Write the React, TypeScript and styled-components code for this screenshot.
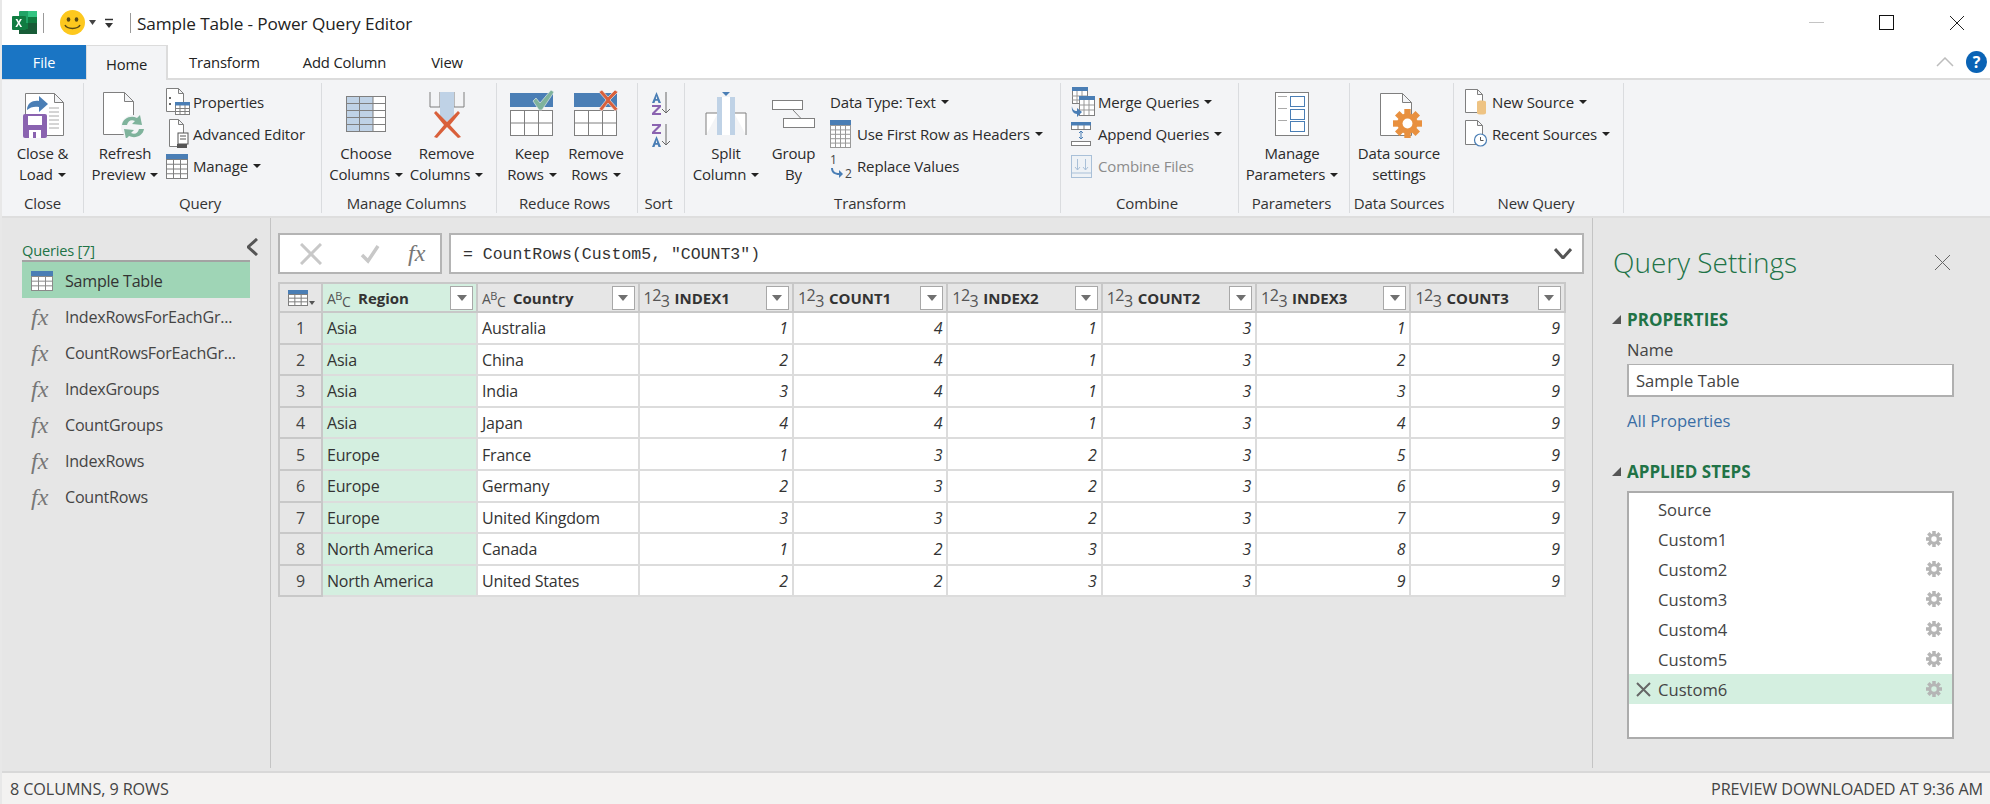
import React from "react";
import styled, { createGlobalStyle } from "styled-components";

const Global = createGlobalStyle`
  html, body { margin: 0; padding: 0; width: 1990px; height: 804px; overflow: hidden; background: #fff; }
  * { box-sizing: border-box; }
  body { font-family: "Open Sans", "Noto Sans", sans-serif; color: #2b2b2b; }
`;

const Window = styled.div`
  width: 1990px; height: 804px; display: flex; flex-direction: column; overflow: hidden;
  font-size: 15px; letter-spacing: -0.15px; border-left: 2px solid #e8e8e8;
`;

const TitleBar = styled.div`
  height: 45px; display: flex; align-items: center; flex: none; position: relative; padding-left: 10px;
`;
const TitleSep = styled.div<{ $l: number; $r: number }>`
  width: 1px; height: 20px; background: #9a9a9a; margin: 0 ${(p) => p.$r}px 0 ${(p) => p.$l}px;
`;
const TitleText = styled.div`
  font-size: 17.2px; color: #222; letter-spacing: -0.1px; margin-left: 6px; padding-top: 2px;
`;
const WindowControls = styled.div`
  margin-left: auto; display: flex; align-items: center; gap: 55px; padding-right: 25px;
`;

const TabRow = styled.div`
  height: 35px; flex: none; display: flex; align-items: stretch; border-bottom: 2px solid #dcdcdc; position: relative;
`;
const FileTab = styled.div`
  width: 84px; height: 34px; background: #1a75c4; color: #fff; display: flex; align-items: center; justify-content: center; font-size: 14.5px; padding-top: 1px;
`;
const Tab = styled.div<{ $active?: boolean; $w: number }>`
  width: ${(p) => p.$w}px; height: ${(p) => (p.$active ? 35 : 33)}px; display: flex; align-items: center; justify-content: center; font-size: 14.8px; color: #222; padding-top: 1px;
  ${(p) => p.$active && `background:#f3f4f6;border:2px solid #dcdcdc;border-width:1px 2px 0 1px;`}
`;
const TabRight = styled.div`
  margin-left: auto; display: flex; align-items: center; gap: 12px; padding-right: 3px;
`;

const Ribbon = styled.div`
  height: 138px; flex: none; display: flex; background: #f3f4f6; border-bottom: 2px solid #dedede;
`;
const Group = styled.div<{ $w: number }>`
  width: ${(p) => p.$w}px; display: flex; flex-direction: column; flex: none;
`;
const GroupBody = styled.div<{ $pad?: number }>`
  flex: 1; display: flex; padding-left: ${(p) => p.$pad || 0}px; min-height: 0;
`;
const GroupLabel = styled.div<{ $flush?: boolean }>`
  height: 26px; line-height: 26px; text-align: center; color: #333; font-size: 15px; flex: none; white-space: nowrap; padding-right: ${(p) => (p.$flush ? 0 : 5)}px;
`;
const Divider = styled.div`
  width: 1px; flex: none; background: #dadcdf; margin: 3px 0 3px;
`;
const BigButton = styled.div<{ $w: number }>`
  width: ${(p) => p.$w}px; flex: none; display: flex; flex-direction: column; align-items: center; padding-top: 12px; text-align: center; line-height: 21px; white-space: nowrap;
`;
const BigIcon = styled.div`
  height: 46px; margin-bottom: 5px; display: flex; align-items: flex-start; justify-content: center;
`;
const SmallCol = styled.div<{ $pad?: number }>`
  display: flex; flex-direction: column; padding-top: 6px; padding-left: ${(p) => p.$pad || 0}px;
`;
const SmallRow = styled.div<{ $disabled?: boolean }>`
  height: 32px; display: flex; align-items: center; white-space: nowrap; color: ${(p) => (p.$disabled ? "#8c8c8c" : "inherit")};
`;
const SmallIcon = styled.div`
  width: 27px; height: 32px; display: flex; align-items: center; flex: none;
`;
const Caret = styled.span`
  display: inline-block; width: 0; height: 0; border-left: 4px solid transparent; border-right: 4px solid transparent; border-top: 4px solid #222; vertical-align: 3px; margin-left: 5px;
`;
const SortCol = styled.div`
  width: 100%; display: flex; flex-direction: column; align-items: center; gap: 8px; padding-top: 11px;
`;

const Main = styled.div`
  flex: 1; min-height: 0; display: flex; background: #e6e6e6;
`;
const Sidebar = styled.div`
  width: 269px; flex: none; border-right: 1px solid #c4c4c4; padding: 20px 0 0 20px; margin-bottom: 3px;
`;
const SideHead = styled.div`
  display: flex; align-items: flex-start; justify-content: space-between; width: 236px; height: 22px; color: #217346; font-size: 14.6px; letter-spacing: -0.2px; line-height: 24px;
`;
const QueryRow = styled.div<{ $active?: boolean }>`
  width: 228px; display: flex; align-items: center; white-space: nowrap; font-size: 16.1px; color: #444; letter-spacing: -0.25px;
  height: ${(p) => (p.$active ? 38 : 36)}px;
  ${(p) => p.$active && `background:#9fd5b6;border-top:2px solid #a3a3a3;color:#333;margin-bottom:1px;padding-top:1px;`}
`;
const QueryIcon = styled.div`
  width: 43px; flex: none; padding-left: 9px; display: flex; align-items: center;
`;
const Fx = styled.span<{ $size: number }>`
  font-family: "Liberation Serif", serif; font-style: italic; font-size: ${(p) => p.$size}px; color: #777; letter-spacing: 0;
`;

const Center = styled.div`
  width: 1321px; flex: none; padding: 15px 0 0 7px; display: flex; flex-direction: column;
`;
const FormulaRow = styled.div`
  display: flex; gap: 7px; height: 41px; width: 1306px; flex: none;
`;
const FxBox = styled.div`
  width: 164px; background: #fff; border: 2px solid #b4b4b4; display: flex; align-items: center; position: relative; padding-left: 20px; gap: 26px;
`;
const FxSlot = styled.span`
  margin-left: 2px;
`;
const CheckSlot = styled.span`
  display: flex; margin-left: 12px;
`;
const FormulaBox = styled.div`
  flex: 1; background: #fff; border: 2px solid #b4b4b4; display: flex; align-items: center; padding: 0 10px 0 12px;
  font-family: "Liberation Mono", monospace; font-size: 16.5px; color: #333; letter-spacing: 0; white-space: pre;
`;
const FormulaText = styled.span`
  padding-top: 2px;
`;
const FormulaChevron = styled.span`
  margin-left: auto; display: flex;
`;
const Table = styled.div`
  margin-top: 8px; width: 1288px; display: grid; grid-template-columns: 43px 155px 161.5px repeat(6, 154.4px); border: 2px solid #c8c8c8; border-right-width: 1px; border-bottom-width: 0;
  background: #fff;
`;
const HeadCell = styled.div<{ $sel?: boolean }>`
  height: 29px; background: ${(p) => (p.$sel ? "#d4efe0" : "#e6e6e6")}; border-right: 2px solid #c8c8c8; border-bottom: 2px solid #c8c8c8;
  display: flex; align-items: center; padding: 1px 0 0 4px; position: relative; font-weight: 700; color: #333; font-size: 15px; letter-spacing: 0;
`;
const CornerCell = styled(HeadCell)`
  padding-left: 8px; border-right-width: 2px;
`;
const TypeIcon = styled.span<{ $size: number }>`
  width: 31px; flex: none; color: #555; font-weight: 400; font-size: ${(p) => p.$size}px; letter-spacing: -0.5px; display: inline-flex; align-items: center;
`;
const Sup = styled.span<{ $small?: boolean }>`
  position: relative; top: -3px; ${(p) => p.$small && `font-size: 11px;`}
`;
const Sub = styled.span`
  position: relative; top: 3px;
`;
const FilterBtn = styled.div`
  position: absolute; right: 3px; top: 2px; width: 23px; height: 24px; background: #fff; border: 1px solid #a8a8a8; display: flex; align-items: center; justify-content: center;
  &::after { content: ""; border-left: 5px solid transparent; border-right: 5px solid transparent; border-top: 6px solid #707070; }
`;
const RowHead = styled.div`
  height: 31.6px; background: #e6e6e6; border-right: 2px solid #c8c8c8; border-bottom: 2px solid #c8c8c8; display: flex; align-items: center; justify-content: center; font-size: 16px; color: #444; padding-top: 1px;
`;
const Cell = styled.div<{ $sel?: boolean; $num?: boolean }>`
  height: 31.6px; background: ${(p) => (p.$sel ? "#d4efe0" : "#fff")}; border-right: 2px solid #dcdcdc; border-bottom: 2px solid #dcdcdc;
  display: flex; align-items: center; white-space: nowrap; color: #333; font-size: 16px; letter-spacing: -0.2px; padding: 1px 4px 0;
  ${(p) => p.$num && `justify-content:flex-end;font-style:italic;padding-right:4px;`}
`;

const Settings = styled.div`
  flex: 1; border-left: 1px solid #c4c4c4; margin-bottom: 3px; padding: 0 0 0 19px; position: relative;
`;
const SettingsTitle = styled.div`
  height: 46px; margin: 21px 0 0 1px; display: flex; align-items: center; justify-content: space-between; font-size: 28px; font-weight: 300; color: #217346; letter-spacing: 0; width: 338px;
`;
const SectionHead = styled.div<{ $mt: number }>`
  margin-top: ${(p) => p.$mt}px; height: 24px; display: flex; align-items: center; font-weight: 700; color: #217346; font-size: 17px; letter-spacing: 0;
`;
const Tri = styled.span`
  width: 15px; flex: none; display: inline-block;
  &::before { content: ""; display: block; width: 0; height: 0; border-bottom: 9px solid #555; border-left: 9px solid transparent; }
`;
const Field = styled.div`
  margin-left: 15px; width: 327px;
`;
const FieldLabel = styled.div`
  height: 22px; margin-top: 8px; line-height: 22px; color: #444; font-size: 16.6px; letter-spacing: 0;
`;
const NameInput = styled.div`
  height: 33px; margin-top: 3px; background: #fff; border: 2px solid #b0b0b0; border-top-width: 1px; display: flex; align-items: center; padding: 1px 0 0 7px; font-size: 16.6px; letter-spacing: 0; color: #444;
`;
const LinkText = styled.div`
  margin-top: 13px; height: 22px; line-height: 22px; color: #3a6ea5; font-size: 16.6px; letter-spacing: 0;
`;
const Steps = styled.div`
  margin: 8px 0 0 15px; width: 327px; height: 248px; background: #fff; border: 2px solid #acacac; padding-top: 1px;
`;
const Step = styled.div<{ $sel?: boolean }>`
  height: 30px; display: flex; align-items: center; position: relative; padding: 0 10px 0 29px; font-size: 16.6px; letter-spacing: 0; color: #444; justify-content: space-between;
  ${(p) => p.$sel && `background:#d4efe0;`}
`;
const StepX = styled.span`
  position: absolute; left: 7px; top: 8px; display: flex;
`;

const StatusBar = styled.div`
  height: 33px; flex: none; background: #f3f2f1; border-top: 2px solid #d8d8d8; display: flex; align-items: center; justify-content: space-between; padding: 0 7px 0 8px; color: #444; font-size: 16.2px; letter-spacing: -0.1px;
`;

/* ---- drawings ---- */
const Blue = "#4a7eb5";
const Gray = "#7f7f7f";

const Excel = () => (
  <svg width="25" height="23" viewBox="0 0 25 23">
    <rect x="7" y="0" width="18" height="23" rx="1" fill="#21a366" />
    <rect x="16" y="0" width="9" height="6" fill="#33c481" />
    <rect x="7" y="6" width="9" height="6" fill="#21a366" />
    <rect x="16" y="6" width="9" height="6" fill="#107c41" />
    <rect x="7" y="12" width="9" height="6" fill="#107c41" />
    <rect x="16" y="12" width="9" height="6" fill="#185c37" />
    <rect x="7" y="18" width="18" height="5" fill="#185c37" />
    <rect x="0" y="5" width="14" height="14" rx="1" fill="#107c41" />
    <path d="M3.5 8l2.3 4-2.5 4h1.9l1.5-2.7L8.2 16h1.9l-2.5-4 2.3-4H8L6.7 10.500 5.400 8z" fill="#fff" />
  </svg>
);
const Smiley = () => (
  <svg width="25" height="25" viewBox="0 0 25 25">
    <circle cx="12.500" cy="12.500" r="12.500" fill="#fdc81e" />
    <ellipse cx="8.500" cy="9.500" rx="1.800" ry="2.300" fill="#5a4a14" />
    <ellipse cx="16.500" cy="9.500" rx="1.800" ry="2.300" fill="#5a4a14" />
    <path d="M5 15c2 4.500 13 4.500 15 0" stroke="#5a4a14" strokeWidth="1.500" fill="none" />
  </svg>
);
const QatCaret = () => (
  <svg width="10" height="6" viewBox="0 0 10 6" style={{ marginLeft: 3 }}>
    <path d="M1 0h7L4.500 5z" fill="#444" />
  </svg>
);
const QatCustom = () => (
  <svg width="10" height="12" viewBox="0 0 10 12" style={{ marginLeft: 6, marginRight: 16 }}>
    <path d="M1 2.500h8" stroke="#333" strokeWidth="1.500" />
    <path d="M1 6h8L5 11z" fill="#333" />
  </svg>
);
const Doc = ({ w, h, x = 0.5, y = 0.5 }: { w: number; h: number; x?: number; y?: number }) => (
  <path
    d={`M${x} ${y}h${w - 9}l9 9v${h - 9}h${-w}zM${x + w - 9} ${y}v9h9`}
    fill="#fff"
    stroke={Gray}
    strokeWidth="1"
  />
);
const CloseLoadIcon = () => (
  <svg width="45" height="46" viewBox="0 0 45 46">
    <Doc w={38} h={42} x={5.500} y={1.500} />
    <path d="M29 16h10M29 20h10M29 24h10M29 28h10M29 32h10M29 36h10" stroke="#aaa" />
    <path d="M7 18c0-7 6-10 12-9V4l9 8-9 8v-5c-4-1-9 0-12 3z" fill={Blue} />
    <rect x="3" y="22" width="24" height="24" rx="2" fill="#8a63b0" />
    <rect x="8" y="24" width="14" height="9" fill="#fff" />
    <rect x="9" y="38" width="12" height="8" fill="#fff" />
    <rect x="13" y="40" width="3" height="6" fill="#8a63b0" />
  </svg>
);
const RefreshIcon = () => (
  <svg width="46" height="46" viewBox="0 0 46 46">
    <Doc w={30} h={42} x={1.500} y={0.500} />
    <circle cx="31" cy="35" r="12" fill="#f3f4f6" />
    <path d="M20 33c1-7 9-10 15-7l3-3 2 10-10-1 3-3c-4-2-7 0-8 4zM42 37c-1 7-9 10-15 7l-3 3-2-10 10 1-3 3c4 2 7 0 8-4z" fill="#7fb39c" />
  </svg>
);
const Grid = ({ w, h, cols, rows, head = 0, color = Gray, fill = "#fff" }: { w: number; h: number; cols: number; rows: number; head?: number; color?: string; fill?: string }) => {
  const d: string[] = [];
  const cw = w / cols;
  const rh = (h - head) / rows;
  for (let i = 1; i < cols; i++) d.push(`M${0.5 + i * cw} ${head}V${h}`);
  for (let i = head ? 0 : 1; i < rows; i++) d.push(`M0 ${head + 0.5 + i * rh}H${w}`);
  return (
    <svg width={w + 1} height={h + 1} viewBox={`0 0 ${w + 1} ${h + 1}`}>
      <rect x="0.500" y="0.500" width={w} height={h} fill={fill} stroke={color} />
      {head > 0 && <rect x="0" y="0" width={w + 1} height={head} fill={Blue} />}
      <path d={d.join("")} stroke={color} fill="none" />
    </svg>
  );
};
const ChooseIcon = () => (
  <svg width="40" height="36" viewBox="0 0 40 36" style={{ marginTop: 4 }}>
    <rect x="0.500" y="0.500" width="39" height="35" fill="#fff" stroke={Gray} />
    <rect x="1" y="1" width="26" height="34" fill="#bfd2e6" />
    <path d="M13.500 1v34M27 1v34M1 7.500h38M1 14.500h38M1 21.500h38M1 28.500h38" stroke={Gray} fill="none" />
  </svg>
);
const RemoveColIcon = () => (
  <svg width="36" height="46" viewBox="0 0 36 46">
    <path d="M1 0v15h10M35 0v15H25M11 0v15M25 0v15" stroke={Gray} fill="none" />
    <path d="M11 0h14v24l-7 6-7-6z" fill="#bfd2e6" />
    <path d="M5 21l2-2 11 11 11-11 2 2-10 12 11 12-3 1-11-11-10 11-3-1 10-12z" fill="#d9603b" />
  </svg>
);
const RowsIcon = ({ x }: { x?: boolean }) => (
  <svg width="46" height="46" viewBox="0 0 46 46" style={{ overflow: "visible" }}>
    <rect x="1" y="1" width="43" height="14" fill={Blue} />
    <rect x="1.500" y="18.500" width="42" height="25" fill="#fff" stroke={Gray} />
    <path d="M15.500 18v25M29.500 18v25M1 31h43" stroke={Gray} />
    {x ? (
      <path d="M26 0l3-2 6 7 7-7 3 2-8 8 8 9-3 2-7-8-6 8-3-2 7-9z" fill="#d9603b" stroke="#f3f4f6" strokeWidth="0.600" />
    ) : (
      <path d="M24 9l3-3 4 5L42-2l3 2-12 18h-3z" fill="#7fb39c" stroke="#f3f4f6" strokeWidth="0.600" />
    )}
  </svg>
);
const SortIcon = ({ desc }: { desc?: boolean }) => (
  <svg width="22" height="24" viewBox="0 0 22 24">
    <path d="M16 1v21M12 18l4 4 4-4" stroke="#666" strokeWidth="1" fill="none" />
    {desc ? (
      <>
        <path d="M2 1h9v2L5 9h6v2H2V9l6-6H2z" fill="#8a63b0" />
        <path d="M6.500 13l4.500 11H8.500l-.8-2.200H5.300L4.500 24H2zM6.500 17l-.7 3h1.400z" fill={Blue} />
      </>
    ) : (
      <>
        <path d="M6.500 1L11 12H8.500l-.8-2.200H5.300L4.500 12H2zM6.500 5l-.7 3h1.400z" fill={Blue} />
        <path d="M2 14h9v2l-6 6h6v2H2v-2l6-6H2z" fill="#8a63b0" />
      </>
    )}
  </svg>
);
const SplitIcon = () => (
  <svg width="42" height="43" viewBox="0 0 42 43">
    <path d="M1 43V21h12M41 43V21H29" stroke={Gray} fill="#fff" />
    <rect x="12" y="5" width="18" height="38" fill="#fff" />
    <rect x="12" y="5" width="5" height="38" fill="#bfd2e6" />
    <rect x="25" y="5" width="5" height="38" fill="#bfd2e6" />
    <path d="M17 0h8l-4 4z" fill={Blue} />
  </svg>
);
const GroupByIcon = () => (
  <svg width="43" height="28" viewBox="0 0 43 28" style={{ marginTop: 8 }}>
    <rect x="0.500" y="0.500" width="30" height="9" fill="#fff" stroke={Gray} />
    <rect x="11.500" y="18.500" width="31" height="9" fill="#fff" stroke={Gray} />
    <path d="M21 10l8 8.500" stroke={Gray} />
  </svg>
);
function Grid0() {
  return (
    <>
      <rect x=".5" y=".5" width="14" height="12" fill="#fff" stroke={Gray} />
      <rect x="0" y="0" width="15" height="3.500" fill={Blue} />
      <path d="M5 3v10M10 3v10M0 6.500h15M0 9.500h15" stroke={Gray} />
    </>
  );
}
const PropsIcon = () => (
  <svg width="25" height="28" viewBox="0 0 25 28">
    <path d="M.5 .5h12l5 5v18H.5zM12.500 .5v5h5" fill="#fff" stroke={Gray} />
    <path d="M3 10h2M3 16h2" stroke="#666" strokeWidth="2" />
    <g transform="translate(9 14)"><Grid0 /></g>
  </svg>
);
const AdvIcon = () => (
  <svg width="22" height="30" viewBox="0 0 22 30" style={{ marginLeft: 3 }}>
    <path d="M.5 .5h9l5 5v22H.5zM9.500 .5v5h5" fill="#fff" stroke={Gray} />
    <rect x="9" y="14" width="10" height="11" fill="#fff" stroke="#555" />
    <path d="M11 17h6M11 20h6" stroke="#555" />
    <rect x="8" y="25" width="10" height="4" fill="#555" />
  </svg>
);
const TableSmall = () => <Grid w={21} h={24} cols={3} rows={4} head={5} />;
const UseFirstIcon = () => <Grid w={20} h={27} cols={4} rows={5} head={5} color="#999" />;
const ReplaceIcon = () => (
  <svg width="24" height="26" viewBox="0 0 24 26">
    <text x="0" y="11" fontFamily="Open Sans, sans-serif" fontSize="12" fill="#444">1</text>
    <text x="15" y="25" fontFamily="Open Sans, sans-serif" fontSize="12" fill="#444">2</text>
    <path d="M3 15c0 4 3 5 6 5v-3l4 4-4 4v-3c-4 0-8-2-8-7z" fill={Blue} />
  </svg>
);
const MergeIcon = () => (
  <svg width="24" height="30" viewBox="0 0 24 30">
    <g transform="translate(1 0)"><rect x=".5" y=".5" width="15" height="16" fill="#fff" stroke={Gray} /><rect width="16" height="4" fill={Blue} /><path d="M5 4v12M10 4v12M0 9h15M0 13h15" stroke="#999" /></g>
    <g transform="translate(8 9)"><rect x=".5" y=".5" width="15" height="19" fill="#fff" stroke={Gray} /><rect width="16" height="4" fill={Blue} /><path d="M5 4v15M10 4v15M0 9h15M0 14h15" stroke="#999" /></g>
    <path d="M1 19c0 3 2 5 5 5v-3l5 4-5 5v-3c-3 0-6-3-5-8z" fill={Blue} />
  </svg>
);
const AppendIcon = () => (
  <svg width="22" height="24" viewBox="0 0 22 24">
    <rect x=".5" y=".5" width="19" height="7" fill="#fff" stroke={Gray} />
    <rect width="20" height="3.500" fill={Blue} />
    <path d="M7 3v5M13 3v5M7 19v5M13 19v5" stroke={Gray} />
    <rect x=".5" y="19.500" width="19" height="4" fill="#fff" stroke={Gray} />
    <path d="M10 9v8M8 11l2-2 2 2M8 15l2 2 2-2" stroke={Blue} fill="none" />
  </svg>
);
const CombineIcon = () => (
  <svg width="22" height="23" viewBox="0 0 22 23">
    <rect x=".5" y=".5" width="20" height="22" fill="#eef2f6" stroke="#a9c0d8" />
    <path d="M6.500 4v11M4 12l2.500 3 2.500-3M14.500 4v11M12 12l2.500 3 2.500-3M1 18h19" stroke="#a9c0d8" fill="none" />
  </svg>
);
const ParamsIcon = () => (
  <svg width="34" height="44" viewBox="0 0 34 44">
    <rect x=".5" y=".5" width="33" height="43" fill="#fff" stroke={Gray} />
    <path d="M3 4.500h9M3 16.500h9M3 28.500h9" stroke="#aaa" />
    <rect x="15.500" y="4.500" width="14" height="10" fill="#fff" stroke={Blue} />
    <rect x="15.500" y="17.500" width="14" height="10" fill="#fff" stroke={Blue} />
    <rect x="15.500" y="29.500" width="14" height="10" fill="#fff" stroke={Blue} />
  </svg>
);
const GearPath = ({ size, color, hole }: { size: number; color: string; hole: string }) => {
  const c = size / 2;
  const r = size * 0.35;
  const tw = size * 0.22;
  return (
    <svg width={size} height={size} viewBox={`0 0 ${size} ${size}`}>
      {[0, 45, 90, 135].map((a) => (
        <rect key={a} x={c - tw / 2} y={0} width={tw} height={size} fill={color} transform={`rotate(${a} ${c} ${c})`} />
      ))}
      <circle cx={c} cy={c} r={r} fill={color} />
      <circle cx={c} cy={c} r={size * 0.17} fill={hole} />
    </svg>
  );
};
const DataSourceIcon = () => (
  <svg width="46" height="46" viewBox="0 0 46 46" style={{ marginLeft: 5 }}>
    <Doc w={31} h={42} x={1.500} y={1.500} />
    <foreignObject x="14" y="17" width="29" height="29">
      <GearPath size={29} color="#e8903f" hole="#fff" />
    </foreignObject>
  </svg>
);
const NewSourceIcon = () => (
  <svg width="22" height="26" viewBox="0 0 22 26">
    <path d="M.5 .5h12l5 5v18H.5zM12.500 .5v5h5" fill="#fff" stroke={Gray} />
    <path d="M12 13c0-2 9-2 9 0v11c0 2-9 2-9 0z" fill="#eec383" />
  </svg>
);
const RecentIcon = () => (
  <svg width="24" height="28" viewBox="0 0 24 28">
    <path d="M.5 .5h12l5 5v19H.5zM12.500 .5v5h5" fill="#fff" stroke={Gray} />
    <circle cx="15.500" cy="20" r="6" fill="#fff" stroke={Blue} strokeWidth="1.200" />
    <path d="M15.500 17v3.500h3" stroke="#555" fill="none" />
  </svg>
);
const Cross = ({ size, color, w = 1 }: { size: number; color: string; w?: number }) => (
  <svg width={size} height={size} viewBox={`0 0 ${size} ${size}`}>
    <path d={`M1 1L${size - 1} ${size - 1}M${size - 1} 1L1 ${size - 1}`} stroke={color} strokeWidth={w} />
  </svg>
);
const Chevron = ({ dir, w, h, color, sw }: { dir: "up" | "down" | "left"; w: number; h: number; color: string; sw: number }) => {
  const d =
    dir === "up" ? `M1 ${h - 1}L${w / 2} 1L${w - 1} ${h - 1}` : dir === "down" ? `M1 1L${w / 2} ${h - 1}L${w - 1} 1` : `M${w - 1} 1L1 ${h / 2}L${w - 1} ${h - 1}`;
  return (
    <svg width={w} height={h} viewBox={`0 0 ${w} ${h}`}>
      <path d={d} stroke={color} strokeWidth={sw} fill="none" />
    </svg>
  );
};
const Check = () => (
  <svg width="20" height="20" viewBox="0 0 20 20">
    <path d="M2 11l6 6L18 2" stroke="#c8c8c8" strokeWidth="3.500" fill="none" />
  </svg>
);

const TypeABC = () => (
  <TypeIcon $size={14}>
    A<Sup $small>B</Sup>
    <Sub>C</Sub>
  </TypeIcon>
);
const Type123 = () => (
  <TypeIcon $size={16}>
    1<Sup>2</Sup>
    <Sub>3</Sub>
  </TypeIcon>
);

const data: [string, string, number, number, number, number, number, number][] = [
  ["Asia", "Australia", 1, 4, 1, 3, 1, 9],
  ["Asia", "China", 2, 4, 1, 3, 2, 9],
  ["Asia", "India", 3, 4, 1, 3, 3, 9],
  ["Asia", "Japan", 4, 4, 1, 3, 4, 9],
  ["Europe", "France", 1, 3, 2, 3, 5, 9],
  ["Europe", "Germany", 2, 3, 2, 3, 6, 9],
  ["Europe", "United Kingdom", 3, 3, 2, 3, 7, 9],
  ["North America", "Canada", 1, 2, 3, 3, 8, 9],
  ["North America", "United States", 2, 2, 3, 3, 9, 9],
];
const numCols = ["INDEX1", "COUNT1", "INDEX2", "COUNT2", "INDEX3", "COUNT3"];
const queries = ["IndexRowsForEachGr...", "CountRowsForEachGr...", "IndexGroups", "CountGroups", "IndexRows", "CountRows"];
const steps = ["Custom1", "Custom2", "Custom3", "Custom4", "Custom5", "Custom6"];

const Big = ({ w, icon, l1, l2, caret = true }: { w: number; icon: React.ReactNode; l1: string; l2: string; caret?: boolean }) => (
  <BigButton $w={w}>
    <BigIcon>{icon}</BigIcon>
    <div>{l1}</div>
    <div>
      {l2}
      {caret && <Caret />}
    </div>
  </BigButton>
);
const Small = ({ icon, text, caret, disabled }: { icon?: React.ReactNode; text: string; caret?: boolean; disabled?: boolean }) => (
  <SmallRow $disabled={disabled}>
    {icon && <SmallIcon>{icon}</SmallIcon>}
    {text}
    {caret && <Caret />}
  </SmallRow>
);

export default function App() {
  return (
    <Window>
      <Global />
      <TitleBar>
        <Excel />
        <TitleSep $l={6} $r={16} />
        <Smiley />
        <QatCaret />
        <QatCustom />
        <TitleSep $l={0} $r={0} />
        <TitleText>Sample Table - Power Query Editor</TitleText>
        <WindowControls>
          <svg width="15" height="2" viewBox="0 0 15 2"><rect width="15" height="1" fill="#c4c4c4" /></svg>
          <svg width="15" height="15" viewBox="0 0 15 15"><rect x=".5" y=".5" width="14" height="14" fill="none" stroke="#111" /></svg>
          <Cross size={16} color="#222" />
        </WindowControls>
      </TitleBar>
      <TabRow>
        <FileTab>File</FileTab>
        <Tab $active $w={82}>Home</Tab>
        <Tab $w={113}>Transform</Tab>
        <Tab $w={127}>Add Column</Tab>
        <Tab $w={78}>View</Tab>
        <TabRight>
          <Chevron dir="up" w={18} h={10} color="#bdbdbd" sw={1.500} />
          <svg width="21" height="22" viewBox="0 0 21 22">
            <ellipse cx="10.500" cy="11" rx="10.500" ry="11" fill="#0a63b5" />
            <text x="10.500" y="17" textAnchor="middle" fontFamily="Open Sans, sans-serif" fontWeight="700" fontSize="16" fill="#fff">?</text>
          </svg>
        </TabRight>
      </TabRow>
      <Ribbon>
        <Group $w={81}>
          <GroupBody>
            <Big w={81} icon={<CloseLoadIcon />} l1="Close &" l2="Load" />
          </GroupBody>
          <GroupLabel $flush>Close</GroupLabel>
        </Group>
        <Divider />
        <Group $w={237}>
          <GroupBody>
            <Big w={82} icon={<RefreshIcon />} l1="Refresh" l2="Preview" />
            <SmallCol>
              <Small icon={<PropsIcon />} text="Properties" />
              <Small icon={<AdvIcon />} text="Advanced Editor" />
              <Small icon={<TableSmall />} text="Manage" caret />
            </SmallCol>
          </GroupBody>
          <GroupLabel>Query</GroupLabel>
        </Group>
        <Divider />
        <Group $w={174}>
          <GroupBody $pad={4}>
            <Big w={80} icon={<ChooseIcon />} l1="Choose" l2="Columns" />
            <Big w={81} icon={<RemoveColIcon />} l1="Remove" l2="Columns" />
          </GroupBody>
          <GroupLabel>Manage Columns</GroupLabel>
        </Group>
        <Divider />
        <Group $w={140}>
          <GroupBody $pad={3}>
            <Big w={64} icon={<RowsIcon />} l1="Keep" l2="Rows" />
            <Big w={64} icon={<RowsIcon x />} l1="Remove" l2="Rows" />
          </GroupBody>
          <GroupLabel>Reduce Rows</GroupLabel>
        </Group>
        <Divider />
        <Group $w={46}>
          <GroupBody>
            <SortCol>
              <SortIcon />
              <SortIcon desc />
            </SortCol>
          </GroupBody>
          <GroupLabel>Sort</GroupLabel>
        </Group>
        <Divider />
        <Group $w={375}>
          <GroupBody>
            <Big w={82} icon={<SplitIcon />} l1="Split" l2="Column" />
            <Big w={53} icon={<GroupByIcon />} l1="Group" l2="By" caret={false} />
            <SmallCol $pad={10}>
              <Small text="Data Type: Text" caret />
              <Small icon={<UseFirstIcon />} text="Use First Row as Headers" caret />
              <Small icon={<ReplaceIcon />} text="Replace Values" />
            </SmallCol>
          </GroupBody>
          <GroupLabel>Transform</GroupLabel>
        </Group>
        <Divider />
        <Group $w={177}>
          <GroupBody>
            <SmallCol $pad={10}>
              <Small icon={<MergeIcon />} text="Merge Queries" caret />
              <Small icon={<AppendIcon />} text="Append Queries" caret />
              <Small icon={<CombineIcon />} text="Combine Files" disabled />
            </SmallCol>
          </GroupBody>
          <GroupLabel>Combine</GroupLabel>
        </Group>
        <Divider />
        <Group $w={110}>
          <GroupBody>
            <Big w={106} icon={<ParamsIcon />} l1="Manage" l2="Parameters" />
          </GroupBody>
          <GroupLabel>Parameters</GroupLabel>
        </Group>
        <Divider />
        <Group $w={103}>
          <GroupBody>
            <Big w={98} icon={<DataSourceIcon />} l1="Data source" l2="settings" caret={false} />
          </GroupBody>
          <GroupLabel>Data Sources</GroupLabel>
        </Group>
        <Divider />
        <Group $w={169}>
          <GroupBody>
            <SmallCol $pad={11}>
              <Small icon={<NewSourceIcon />} text="New Source" caret />
              <Small icon={<RecentIcon />} text="Recent Sources" caret />
            </SmallCol>
          </GroupBody>
          <GroupLabel>New Query</GroupLabel>
        </Group>
        <Divider />
      </Ribbon>
      <Main>
        <Sidebar>
          <SideHead>
            Queries [7]
            <Chevron dir="left" w={11} h={18} color="#555" sw={3} />
          </SideHead>
          <QueryRow $active>
            <QueryIcon><Grid w={21} h={19} cols={3} rows={3} head={5} fill="#fff" color="#8a8a8a" /></QueryIcon>
            Sample Table
          </QueryRow>
          {queries.map((q) => (
            <QueryRow key={q}>
              <QueryIcon><Fx $size={24}>fx</Fx></QueryIcon>
              {q}
            </QueryRow>
          ))}
        </Sidebar>
        <Center>
          <FormulaRow>
            <FxBox>
              <Cross size={22} color="#c8c8c8" w={3} />
              <CheckSlot><Check /></CheckSlot>
              <FxSlot><Fx $size={24}>fx</Fx></FxSlot>
            </FxBox>
            <FormulaBox>
              <FormulaText>{'= CountRows(Custom5, "COUNT3")'}</FormulaText>
              <FormulaChevron>
                <Chevron dir="down" w={18} h={11} color="#555" sw={3} />
              </FormulaChevron>
            </FormulaBox>
          </FormulaRow>
          <Table>
            <CornerCell>
              <Grid w={19} h={15} cols={3} rows={3} head={4} />
              <svg width="6" height="4" viewBox="0 0 6 4" style={{ marginTop: 10, marginLeft: 1 }}><path d="M0 0h6L3 4z" fill="#555" /></svg>
            </CornerCell>
            <HeadCell $sel><TypeABC />Region<FilterBtn /></HeadCell>
            <HeadCell><TypeABC />Country<FilterBtn /></HeadCell>
            {numCols.map((c) => (
              <HeadCell key={c}><Type123 />{c}<FilterBtn /></HeadCell>
            ))}
            {data.map((r, i) => (
              <React.Fragment key={i}>
                <RowHead>{i + 1}</RowHead>
                <Cell $sel>{r[0]}</Cell>
                <Cell>{r[1]}</Cell>
                {r.slice(2).map((n, j) => (
                  <Cell key={j} $num>{n}</Cell>
                ))}
              </React.Fragment>
            ))}
          </Table>
        </Center>
        <Settings>
          <SettingsTitle>
            Query Settings
            <Cross size={17} color="#666" />
          </SettingsTitle>
          <SectionHead $mt={22}><Tri />PROPERTIES</SectionHead>
          <Field>
            <FieldLabel>Name</FieldLabel>
            <NameInput>Sample Table</NameInput>
            <LinkText>All Properties</LinkText>
          </Field>
          <SectionHead $mt={27}><Tri />APPLIED STEPS</SectionHead>
          <Steps>
            <Step>Source</Step>
            {steps.map((s, i) => (
              <Step key={s} $sel={i === 5}>
                {i === 5 && <StepX><Cross size={15} color="#666" w={2} /></StepX>}
                {s}
                <GearPath size={16} color="#b5b5b5" hole={i === 5 ? "#d4efe0" : "#fff"} />
              </Step>
            ))}
          </Steps>
        </Settings>
      </Main>
      <StatusBar>
        <span>8 COLUMNS, 9 ROWS</span>
        <span>PREVIEW DOWNLOADED AT 9:36 AM</span>
      </StatusBar>
    </Window>
  );
}
